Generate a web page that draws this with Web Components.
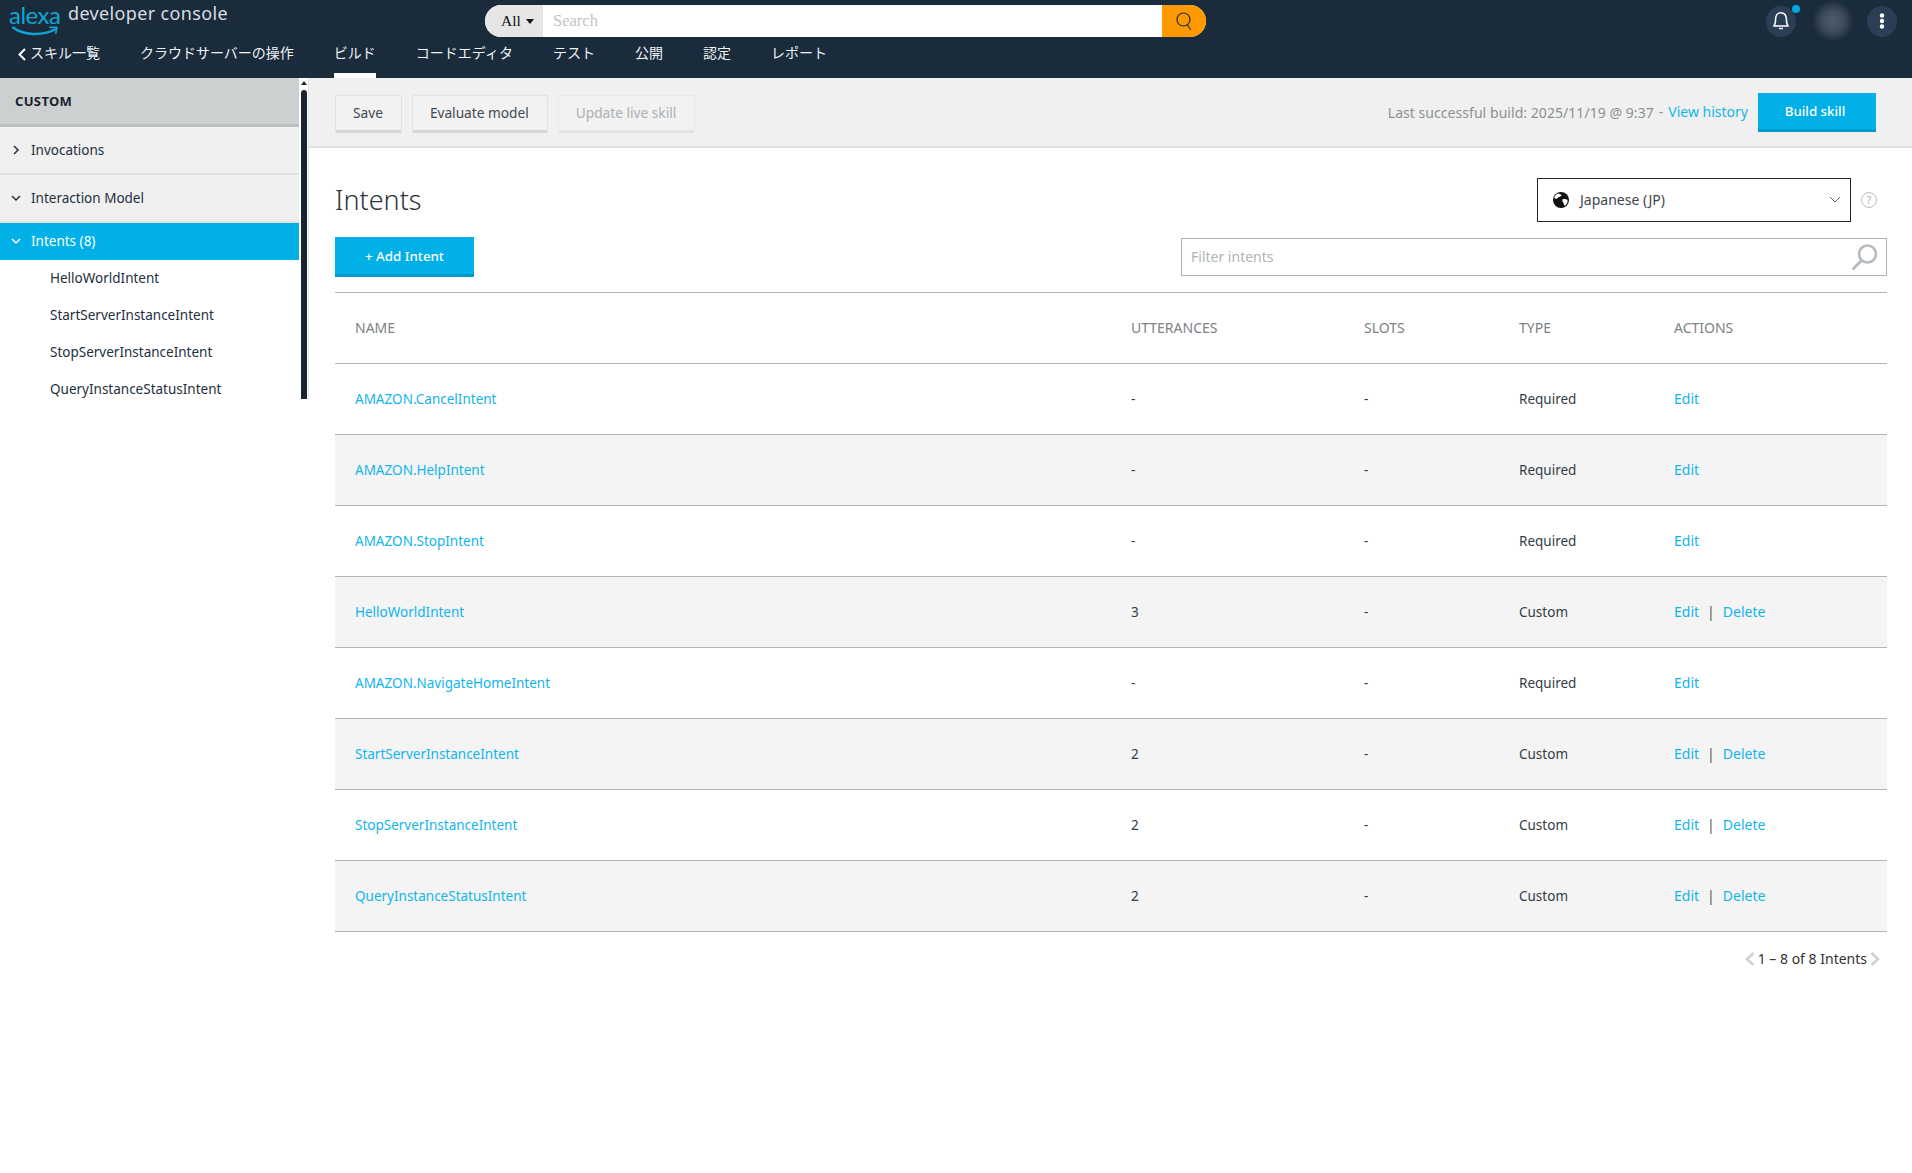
<!DOCTYPE html>
<html lang="ja">
<head>
<meta charset="utf-8">
<title>Alexa Developer Console</title>
<style>
html, body { margin: 0; background: #fff; }
body {
  font: 14px/20px "Noto Sans", "Noto Sans CJK JP", sans-serif;
  color: #232f3e;
  --blue: #00b0e6;
  --blue-dark: #0099cc;
  --link: #12b5ea;
}
</style>
</head>
<body>
<console-app></console-app>

<script>
// small helper: every element below is shadow root + template html
function define(name, html, extra = {}) {
  const template = document.createElement('template');
  template.innerHTML = html;
  class El extends HTMLElement {
    constructor() {
      super();
      this.attachShadow({ mode: 'open' });
      this.shadowRoot.appendChild(template.content.cloneNode(true));
    }
    connectedCallback() {
      if (extra.init) extra.init.call(this);
    }
  }
  customElements.define(name, El);
}

define('nav-tab', `
<style>
:host { display: block; box-sizing: border-box; height: 41px; line-height: 32px; color: #eef2f4; white-space: nowrap; }
:host([active]) { border-bottom: 5px solid #fff; }
</style>
<slot></slot>`);

define('alexa-logo', `
<style>
:host { display: block; position: relative; width: 52px; height: 36px; }
span { display: block; font: 400 24px/normal Lato, sans-serif; color: #12a5d4; letter-spacing: -.5px; white-space: nowrap; }
svg { position: absolute; left: 2px; top: 26px; }
</style>
<span>alexa</span>
<svg width="48" height="12" viewBox="0 0 48 12" fill="none">
  <path d="M2 1.500C12 9 30 10.500 44 3.500" stroke="#12a5d4" stroke-width="2.400" stroke-linecap="round"/>
  <path d="M38.500 1.400L46 1.200 44.600 7.800" stroke="#12a5d4" stroke-width="1.600" stroke-linejoin="round"/>
</svg>`);

define('global-search', `
<style>
:host { display: flex; width: 721px; height: 32px; border-radius: 16px; overflow: hidden; background: #fff; }
.all { box-sizing: border-box; width: 58px; background: #e6e6e6; display: flex; align-items: center; padding-left: 16px; gap: 5px;
  font: 15.500px "Liberation Serif", serif; color: #111; }
.caret { width: 0; height: 0; border: 4px solid transparent; border-top: 5px solid #111; border-bottom: 0; }
.box { flex: 1; padding-left: 10px; font: 16.500px/32px "Liberation Serif", serif; color: #c4c4c4; }
.go { width: 44px; background: #ff9900; display: flex; align-items: center; justify-content: center; }
</style>
<div class="all">All<i class="caret"></i></div>
<div class="box">Search</div>
<div class="go">
  <svg width="18" height="20" viewBox="0 0 18 20" fill="none" stroke="#232f3e" stroke-width="1.200">
    <circle cx="8.500" cy="8.500" r="6.500"/><path d="M12.500 14l3 4.500" stroke-linecap="round"/>
  </svg>
</div>`);

define('user-tools', `
<style>
:host { display: flex; align-items: center; margin-right: 15px; padding-top: 5px; }
.round { position: relative; width: 30px; height: 31px; border-radius: 50%; background: #2c3e55; display: flex; align-items: center; justify-content: center; }
.dot { position: absolute; left: 26px; top: -1px; width: 8px; height: 8px; border-radius: 50%; background: #00a8e1; }
.avatar { width: 42px; height: 42px; margin: 0 13px 0 16px; border-radius: 50%; background: radial-gradient(circle, #4d5b6c 0%, #3f4e5f 35%, #1a2b3b 70%); }
</style>
<div class="round">
  <svg width="18" height="20" viewBox="0 0 16 18" fill="none" stroke="#fff" stroke-width="1.400">
    <path d="M1.500 13.500h13c-1.400-1.400-1.600-3-1.600-6C12.900 4 11 1.500 8 1.500S3.100 4 3.100 7.500c0 3-.2 4.600-1.600 6z" stroke-linejoin="round"/>
    <path d="M6.800 15.800h2.400" stroke-linecap="round"/>
  </svg>
  <i class="dot"></i>
</div>
<div class="avatar"></div>
<div class="round">
  <svg width="6" height="16" viewBox="0 0 6 16" fill="#fff"><circle cx="3" cy="2.500" r="2.200"/><circle cx="3" cy="8" r="2.200"/><circle cx="3" cy="13.500" r="2.200"/></svg>
</div>`);

define('app-header', `
<style>
:host { display: block; height: 78px; background: #1a2b3b; }
.top { display: flex; height: 37px; }
.brand { display: flex; width: 476px; padding-left: 9px; }
.brand span { margin-left: 7px; font: 18px/26px "Noto Sans", sans-serif; letter-spacing: .35px; color: #d8dde1; }
global-search { margin-top: 5px; }
user-tools { margin-left: auto; }
nav { display: flex; gap: 40px; padding-left: 18px; }
.back { display: flex; align-items: flex-start; gap: 4px; }
.back svg { margin-top: 11px; }
</style>
<div class="top">
  <div class="brand"><alexa-logo></alexa-logo><span>developer console</span></div>
  <global-search></global-search>
  <user-tools></user-tools>
</div>
<nav>
  <div class="back">
    <svg width="8" height="13" viewBox="0 0 8 13" fill="none" stroke="#fff" stroke-width="2"><path d="M7 1L1.500 6.500 7 12"/></svg>
    <nav-tab>スキル一覧</nav-tab>
  </div>
  <nav-tab>クラウドサーバーの操作</nav-tab>
  <nav-tab active>ビルド</nav-tab>
  <nav-tab>コードエディタ</nav-tab>
  <nav-tab>テスト</nav-tab>
  <nav-tab>公開</nav-tab>
  <nav-tab>認定</nav-tab>
  <nav-tab>レポート</nav-tab>
</nav>`);

define('side-group', `
<style>
:host { display: flex; align-items: center; box-sizing: border-box; height: 48px; padding-left: 11px; gap: 10px; font-size: 13.500px;
  background: #f0f0f0; border-bottom: 2px solid #e2e2e2; }
:host([current]) { height: 37px; padding-bottom: 2px; background: var(--blue); color: #fff; border: 0; }
svg { flex: none; }
</style>
<svg width="10" height="10" viewBox="0 0 10 10" fill="none" stroke="currentColor" stroke-width="1.500"><path id="c" d="M1 3l4 4 4-4"/></svg>
<slot></slot>`, {
  init() {
    if (this.hasAttribute('closed')) this.shadowRoot.getElementById('c').setAttribute('d', 'M3 1l4 4-4 4');
  }
});

define('side-item', `
<style>
:host { display: block; height: 37px; line-height: 36px; padding-left: 50px; white-space: nowrap; font-size: 13.500px; }
</style>
<slot></slot>`);

define('side-nav', `
<style>
:host { display: flex; height: 321px; border-right: 1px solid #e4e4e4; }
.list { width: 299px; }
.head { box-sizing: border-box; height: 49px; padding-left: 15px; background: #cdd0d0; border-bottom: 3px solid #bdc0c0;
  font-weight: 700; font-size: 13px; line-height: 47px; letter-spacing: .35px; color: #16232f; }
.bar { position: relative; width: 9px; }
.bar::before { content: ""; position: absolute; left: 2px; top: 3px; border: 3px solid transparent; border-top: 0; border-bottom: 4px solid #222; }
.bar::after { content: ""; position: absolute; left: 2px; right: 1px; top: 12px; bottom: 0; background: #1a2430; border-radius: 3px 3px 0 0; }
</style>
<div class="list">
  <div class="head">CUSTOM</div>
  <slot></slot>
</div>
<div class="bar"></div>`);

define('ui-button', `
<style>
:host { display: flex; align-items: center; justify-content: center; box-sizing: border-box; height: 38px; padding: 0 18px 0 17px; font-size: 13.700px;
  background: #f2f2f2; border: 1px solid #e2e2e2; border-bottom: 3px solid #d6d6d6; border-radius: 2px; color: #3f4a52; white-space: nowrap; }
:host([disabled]) { color: #aab0b3; border-color: #e8e8e8; border-bottom-color: #e4e4e4; }
:host([primary]) { padding: 0; background: var(--blue); border: 0; border-bottom: 3px solid var(--blue-dark); border-radius: 0; color: #fff; font-weight: 500; font-size: 13.300px; }
</style>
<slot></slot>`);

define('tool-bar', `
<style>
:host { display: flex; align-items: center; box-sizing: border-box; height: 70px; padding: 0 36px 0 26px; background: #f0f0f0; border-bottom: 2px solid #e0e0e0; }
.left { display: flex; gap: 10px; margin-top: 3px; }
.right { display: flex; align-items: center; margin-left: auto; }
.last { color: #8c9194; letter-spacing: .05px; padding-top: 1px; }
.dash { color: #8c9194; margin: 0 5px; }
a { color: var(--link); margin-right: 10px; }
::slotted(ui-button[primary]) { width: 118px; height: 39px; padding-right: 4px; }
</style>
<div class="left"><slot name="left"></slot></div>
<div class="right"><span class="last"><slot name="build"></slot></span><span class="dash">-</span><a>View history</a><slot name="action"></slot></div>`);

define('locale-select', `
<style>
:host { display: flex; align-items: center; }
.box { display: flex; align-items: center; box-sizing: border-box; width: 314px; height: 44px; border: 1px solid #1f2a30; padding: 0 9px 0 15px; color: #3c4650; }
.box span { margin-left: 11px; }
.box svg.chev { margin-left: auto; }
.help { margin-left: 10px; width: 14px; height: 14px; border: 1px solid #bcbcbc; border-radius: 50%; font-size: 10px; line-height: 14px; text-align: center; color: #aaa; }
</style>
<div class="box">
  <svg width="16" height="16" viewBox="0 0 16 16">
    <circle cx="8" cy="8" r="8" fill="#111"/>
    <path d="M5 1.400C6.500 2 8 2 8.600 3.200 7.800 4.800 5.600 4.600 4.800 6 4 7.300 2.200 6.800 1.200 6 1.500 4 3 2.200 5 1.400zM9.800 7.200c1.500-.4 3.600.2 4.800.8.200 2-.8 4.500-2.800 5.800-1-.8-.8-2.400-1.600-3.400-.6-.9-1.600-2.400-.4-3.200z" fill="#fff"/>
  </svg>
  <span><slot></slot></span>
  <svg class="chev" width="12" height="8" viewBox="0 0 12 8" fill="none" stroke="#666" stroke-width="1"><path d="M1 1l5 5 5-5"/></svg>
</div>
<div class="help">?</div>`);

define('filter-box', `
<style>
:host { display: flex; align-items: center; box-sizing: border-box; width: 706px; height: 38px; border: 1px solid #aab4b8; padding: 0 7px 0 9px; color: #b0b4b6; }
svg { margin-left: auto; }
</style>
<slot></slot>
<svg width="28" height="28" viewBox="0 0 28 28" fill="none" stroke="#b5bcc0">
  <circle cx="16.500" cy="11" r="8.500" stroke-width="2.600"/><path d="M10.500 17.500L2.500 25.500" stroke-width="3" stroke-linecap="round"/>
</svg>`);

const COLS = 'grid-template-columns: 776px 233px 155px 155px 1fr;';

define('intent-head', `
<style>
:host { display: grid; ${COLS} align-items: center; box-sizing: border-box; height: 72px; border-top: 1px solid #b4b4b8; border-bottom: 1px solid #b4b4b8; color: #7d8285; }
div { padding-left: 20px; }
</style>
<div>NAME</div><div>UTTERANCES</div><div>SLOTS</div><div>TYPE</div><div>ACTIONS</div>`);

define('intent-row', `
<style>
:host { display: grid; ${COLS} align-items: center; box-sizing: border-box; height: 71px; border-bottom: 1px solid #b4b4b8; color: #333c44; font-size: 13.500px; }
:host(:nth-child(even)) { background: #f4f4f4; }
div { padding-left: 20px; }
a { color: var(--link); }
.act { font-size: 14px; }
.sep { margin: 0 8px; color: #555; }
</style>
<div><a id="name"></a></div><div id="utt"></div><div id="slots">-</div><div id="type"></div>
<div class="act"><a>Edit</a><span id="del" hidden><span class="sep">|</span><a>Delete</a></span></div>`, {
  init() {
    const $ = (id) => this.shadowRoot.getElementById(id);
    const custom = this.getAttribute('type') === 'Custom';
    $('name').textContent = this.getAttribute('name');
    $('utt').textContent = this.getAttribute('utt') || '-';
    $('type').textContent = this.getAttribute('type');
    $('del').hidden = !custom;
  }
});

define('page-count', `
<style>
:host { display: flex; justify-content: flex-end; align-items: center; gap: 3px; height: 54px; padding-right: 7px; color: #333; }
</style>
<svg width="10" height="14" viewBox="0 0 10 14" fill="none" stroke="#d2d2d2" stroke-width="2.800"><path d="M8.500 1L2 7l6.500 6"/></svg>
<slot></slot>
<svg width="10" height="14" viewBox="0 0 10 14" fill="none" stroke="#d2d2d2" stroke-width="2.800"><path d="M1.500 1L8 7l-6.500 6"/></svg>`);

define('intents-panel', `
<style>
:host { display: block; padding: 0 25px 0 26px; }
.title { display: flex; justify-content: space-between; align-items: center; height: 44px; margin-top: 30px; margin-right: 10px; }
h1 { margin: 0; font: 300 27px/44px "Noto Sans", sans-serif; color: #2b343c; }
.actions { display: flex; justify-content: space-between; align-items: flex-start; height: 55px; margin-top: 15px; }
.actions ui-button { width: 139px; height: 40px; }
.actions filter-box { margin-top: 1px; }
.rows { display: block; }
</style>
<div class="title"><h1>Intents</h1><locale-select>Japanese (JP)</locale-select></div>
<div class="actions"><ui-button primary>+ Add Intent</ui-button><filter-box>Filter intents</filter-box></div>
<intent-head></intent-head>
<div class="rows"><slot></slot></div>
<page-count>1 – 8 of 8 Intents</page-count>`);

define('console-app', `
<style>
:host { display: block; width: 1912px; height: 1173px; overflow: hidden; }
.body { display: flex; align-items: flex-start; }
side-nav { flex: none; }
main { flex: 1; }
</style>
<app-header></app-header>
<div class="body">
  <side-nav>
    <side-group closed>Invocations</side-group>
    <side-group>Interaction Model</side-group>
    <side-group current>Intents (8)</side-group>
    <side-item>HelloWorldIntent</side-item>
    <side-item>StartServerInstanceIntent</side-item>
    <side-item>StopServerInstanceIntent</side-item>
    <side-item>QueryInstanceStatusIntent</side-item>
  </side-nav>
  <main>
    <tool-bar>
      <ui-button slot="left">Save</ui-button>
      <ui-button slot="left">Evaluate model</ui-button>
      <ui-button slot="left" disabled>Update live skill</ui-button>
      <span slot="build">Last successful build: 2025/11/19 @ 9:37</span>
      <ui-button slot="action" primary>Build skill</ui-button>
    </tool-bar>
    <intents-panel>
      <intent-row name="AMAZON.CancelIntent" type="Required"></intent-row>
      <intent-row name="AMAZON.HelpIntent" type="Required"></intent-row>
      <intent-row name="AMAZON.StopIntent" type="Required"></intent-row>
      <intent-row name="HelloWorldIntent" utt="3" type="Custom"></intent-row>
      <intent-row name="AMAZON.NavigateHomeIntent" type="Required"></intent-row>
      <intent-row name="StartServerInstanceIntent" utt="2" type="Custom"></intent-row>
      <intent-row name="StopServerInstanceIntent" utt="2" type="Custom"></intent-row>
      <intent-row name="QueryInstanceStatusIntent" utt="2" type="Custom"></intent-row>
    </intents-panel>
  </main>
</div>`);
</script>
</body>
</html>
